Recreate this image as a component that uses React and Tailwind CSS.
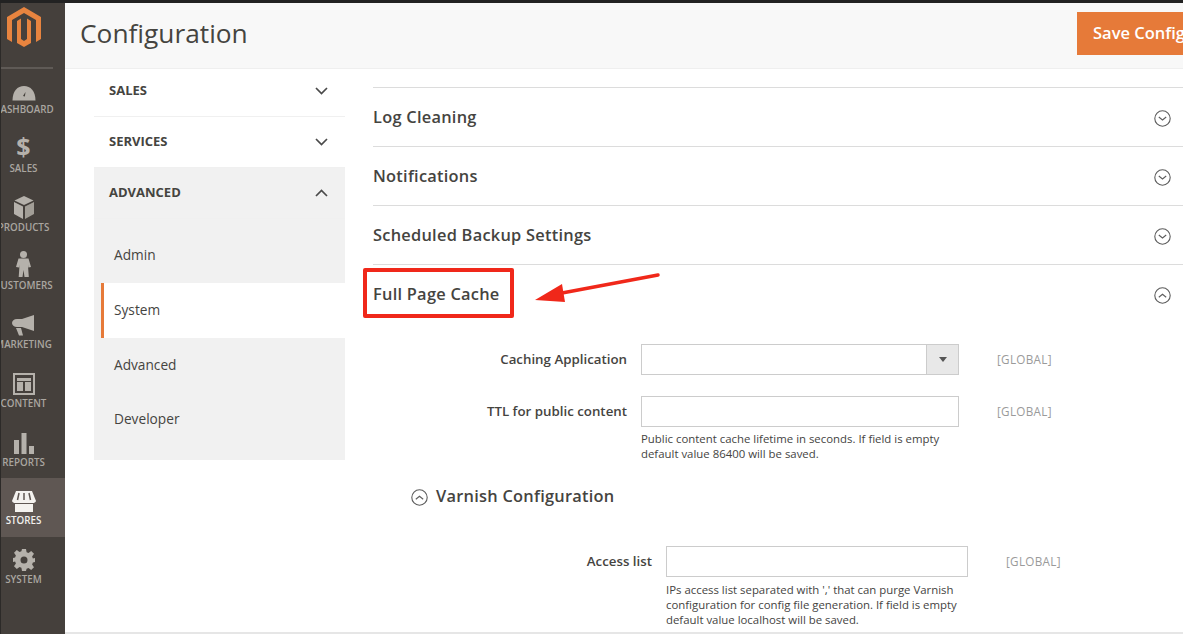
import React from 'react';

const Gauge = () => (
  <svg width="24" height="16" viewBox="0 0 24 16"><path d="M0.5 15.500C0.500 6 5.500 1 12 1s11.500 5 11.500 14.500z" fill="#b5b1ab"/><path d="M11 11l2.500-4-.6 4.600z" fill="#45403c"/></svg>
);
const Box = () => (
  <svg width="20" height="23" viewBox="0 0 20 23"><path d="M10 0l9.500 4.500L10 9 .5 4.500z" fill="#b5b1ab"/><path d="M0 6l9 4.400V23L0 18z" fill="#b5b1ab"/><path d="M20 6l-9 4.400V23l9-5z" fill="#a29e97"/></svg>
);
const Person = () => (
  <svg width="15" height="26" viewBox="0 0 15 26" fill="#b5b1ab"><circle cx="7.500" cy="3.600" r="3.500"/><path d="M2.500 7.500h10L15 16l-2.600.6-.4-3 .2 4 .6 8.400H8.500L7.500 19l-1 7H2.700l.6-8.400.2-4-.4 3L0 16z"/></svg>
);
const Megaphone = () => (
  <svg width="23" height="21" viewBox="0 0 23 21" fill="#b5b1ab"><path d="M22 0v16L10 12H5C2 12 0 10.200 0 8s2-4 5-4h5z"/><path d="M4 13h5l2 7.500H7z"/></svg>
);
const Content = () => (
  <svg width="22" height="22" viewBox="0 0 22 22" fill="none" stroke="#b5b1ab"><rect x="1" y="1" width="20" height="20" strokeWidth="2"/><path d="M4 6.500h14" strokeWidth="3"/><rect x="4.500" y="9.500" width="5" height="8" fill="#b5b1ab" strokeWidth="1"/><rect x="12.500" y="9.500" width="5" height="8" fill="#b5b1ab" strokeWidth="1"/></svg>
);
const Bars = () => (
  <svg width="20" height="21" viewBox="0 0 20 21" fill="#b5b1ab"><rect x="0" y="7" width="5" height="14"/><rect x="7.500" y="0" width="5" height="21"/><rect x="15" y="13" width="5" height="8"/></svg>
);
const Store = () => (
  <svg width="24" height="21" viewBox="0 0 24 21"><path d="M4 0h16l4 10c-.5 1.500-2 2-3 2H3c-1 0-2.500-.5-3-2z" fill="#f4f2ef"/><path d="M7 2L5.500 9M12 2v7M17 2l1.500 7" stroke="#5f5753" strokeWidth="1.500"/><path d="M3 13h18v8H3z" fill="#f4f2ef"/></svg>
);
const Gear = () => (
  <svg width="22" height="22" viewBox="0 0 22 22" fill="#b5b1ab"><path fillRule="evenodd" d="M9 0h4l.6 3.200 1.900.8L18.200 2 21 4.800 19.100 7.500l.8 1.900L22 9v4l-2.100.6-.8 1.900 1.900 2.700-2.800 2.800-2.700-2-1.900.8L13 22H9l-.6-3.200-1.900-.8L3.800 20 1 17.200l1.900-2.700-.8-1.900L0 13V9l2.100-.6.8-1.900L1 3.800 3.800 1l2.700 2 1.900-.8zM11 7.500a3.500 3.500 0 1 0 0 7 3.500 3.500 0 0 0 0-7z"/></svg>
);

const items = [
  ['DASHBOARD', <Gauge />],
  ['SALES', <span className="text-[25px] font-bold leading-[25px] mb-[1px] text-[#b5b1ab]">$</span>],
  ['PRODUCTS', <Box />],
  ['CUSTOMERS', <Person />],
  ['MARKETING', <Megaphone />],
  ['CONTENT', <Content />],
  ['REPORTS', <Bars />],
  ['STORES', <Store />],
  ['SYSTEM', <Gear />],
];

const Circle = ({ up }) => (
  <svg className="mt-[2px]" width="17" height="17" viewBox="0 0 17 17" fill="none" stroke="#5c5c5c" strokeWidth="1.100">
    <circle cx="8.500" cy="8.500" r="7.700" />
    <path d={up ? 'M4.800 10.200l3.700-3 3.700 3' : 'M4.800 7l3.700 3 3.700-3'} />
  </svg>
);

const Chevron = ({ up }) => (
  <svg width="13" height="8" viewBox="0 0 13 8" fill="none" stroke="#4a4a4a" strokeWidth="1.700">
    <path d={up ? 'M1 7l5.500-5.500L12 7' : 'M1 1l5.500 5.500L12 1'} />
  </svg>
);

const NavHead = ({ label, h, up, bg }) => (
  <div className={`flex items-center justify-between pl-[15px] pr-[17px] border-b border-[#f0f0f0] ${h} ${bg}`}>
    <span className="text-[13px] font-bold text-[#45443f]">{label}</span>
    <Chevron up={up} />
  </div>
);

const Section = ({ title, up }) => (
  <div className="h-[59px] border-t border-[#dcdcdc] flex items-center justify-between pr-[12px]">
    <span className="text-[16.400px] font-semibold text-[#45443f] tracking-[0.25px]">{title}</span>
    <Circle up={up} />
  </div>
);

const Global = () => <span className="block text-[11.700px] text-[#9a9a9a] tracking-[0.3px]">[GLOBAL]</span>;

export default function App() {
  return (
    <div className="relative w-[1183px] h-[634px] overflow-hidden flex flex-col bg-white font-['Open_Sans',sans-serif]">
      <div className="h-[3px] shrink-0 bg-[#222]" />
      <div className="flex flex-1 min-h-0">
        <aside className="w-[65px] shrink-0 bg-[#45403c] border-l border-[#2c2a28] overflow-hidden">
          <div className="h-[66px] flex flex-col">
            <div className="flex-1 pl-[6px] pt-[4px]">
              <svg width="34" height="40" viewBox="0 0 34 40" fill="#e8843f">
                <path d="M17 0L34 10V32L29 35V13L17 6 5 13V35L0 32V10Z" />
                <path d="M10 14L14 11.500V32L17 34 20 32V11.500L24 14V36L17 40 10 36Z" />
              </svg>
            </div>
            <div className="h-[2px] w-[52px] bg-[#5f5a56]" />
          </div>
          <div className="mt-[-2px]">
            {items.map(([label, icon]) => {
              const on = label === 'STORES';
              return (
                <div key={label} className={`h-[58.750px] flex justify-start ${on ? 'bg-[#5f5753]' : ''}`}>
                  <div className="w-[45px] flex flex-col items-center">
                    <div className="h-[35px] w-[45px] shrink-0 flex items-end justify-center pb-[1px]">{icon}</div>
                    <span className={`text-[9.800px] leading-[15px] font-semibold whitespace-nowrap ${on ? 'text-[#f2f0ed]' : 'text-[#aaa6a0]'}`}>{label}</span>
                  </div>
                </div>
              );
            })}
          </div>
        </aside>
        <div className="flex-1 flex flex-col min-w-0">
          <header className="h-[66px] shrink-0 bg-[#f8f8f8] border-b border-[#efefef] flex items-start justify-between pl-[15px]">
            <h1 className="text-[26.300px] leading-[36px] mt-[12px] text-[#45443f] font-normal">Configuration</h1>
            <div className="w-[106px] h-[43px] mt-[9px] bg-[#e67a39] text-white text-[16.500px] font-semibold pl-[16px] flex items-center overflow-hidden whitespace-nowrap">Save Configuration</div>
          </header>
          <div className="flex flex-1 min-h-0 border-b-2 border-[#e6e6e6]">
            <nav className="w-[251px] ml-[29px] shrink-0">
              <NavHead label="SALES" h="h-[48px] pb-[3px]" bg="bg-white" />
              <NavHead label="SERVICES" h="h-[51px]" bg="bg-white" />
              <NavHead label="ADVANCED" up h="h-[51px]" bg="bg-[#f1f1f1]" />
              <div className="h-[241px] bg-[#f1f1f1] pt-[9px] text-[13.700px] text-[#45443f]">
                <div className="h-[55px] pl-[20px] flex items-center">Admin</div>
                <div className="h-[55px] ml-[7px] pl-[10px] flex items-center bg-white border-l-[3px] border-[#e67a39]">System</div>
                <div className="h-[55px] pl-[20px] flex items-center">Advanced</div>
                <div className="h-[53px] pl-[20px] flex items-center">Developer</div>
              </div>
            </nav>
            <main className="flex-1 min-w-0 ml-[28px] pt-[18px] overflow-hidden">
              <Section title="Log Cleaning" />
              <Section title="Notifications" />
              <Section title="Scheduled Backup Settings" />
              <Section title="Full Page Cache" up />
              <div className="pt-[21px]">
                <div className="flex items-center h-[31px]">
                  <label className="w-[254px] text-right text-[13.300px] font-semibold text-[#45443f]">Caching Application</label>
                  <div className="ml-[14px] w-[318px] h-[31px] border border-[#cccccc] flex justify-end">
                    <div className="w-[32px] bg-[#e8e8e8] border-l border-[#cccccc] flex items-center justify-center">
                      <div className="w-0 h-0 border-x-[4px] border-x-transparent border-t-[5px] border-t-[#555]" />
                    </div>
                  </div>
                  <div className="ml-[38px]"><Global /></div>
                </div>
                <div className="flex items-center h-[31px] mt-[21px]">
                  <label className="w-[254px] text-right text-[13.300px] font-semibold text-[#45443f]">TTL for public content</label>
                  <div className="ml-[14px] w-[318px] h-[31px] border border-[#cccccc]" />
                  <div className="ml-[38px]"><Global /></div>
                </div>
                <p className="ml-[268px] mt-[4px] w-[320px] text-[11.400px] leading-[15px] text-[#45443f]">Public content cache lifetime in seconds. If field is empty<br />default value 86400 will be saved.</p>
                <div className="flex items-center gap-[8px] ml-[38px] mt-[23px] h-[24px]">
                  <Circle up />
                  <span className="text-[16.400px] font-semibold text-[#45443f] tracking-[0.25px]">Varnish Configuration</span>
                </div>
                <div className="flex items-center h-[31px] mt-[38px]">
                  <label className="w-[279px] text-right text-[13.300px] font-semibold text-[#45443f]">Access list</label>
                  <div className="ml-[14px] w-[302px] h-[31px] border border-[#cccccc]" />
                  <div className="ml-[38px]"><Global /></div>
                </div>
                <p className="ml-[293px] mt-[5px] w-[320px] text-[11.400px] leading-[15px] text-[#45443f]">IPs access list separated with ',' that can purge Varnish<br />configuration for config file generation. If field is empty<br />default value localhost will be saved.</p>
              </div>
            </main>
          </div>
        </div>
      </div>
      <div className="absolute left-[363px] top-[268px] w-[151px] h-[50px] border-[4px] border-[#f0281a] rounded-[2px]" />
      <svg className="absolute left-[534px] top-[270px]" width="130" height="36" viewBox="0 0 130 36">
        <path d="M124 5L28 23" stroke="#f0281a" strokeWidth="3.500" strokeLinecap="round" />
        <path d="M1 30L28 14l3 18z" fill="#f0281a" />
      </svg>
    </div>
  );
}
